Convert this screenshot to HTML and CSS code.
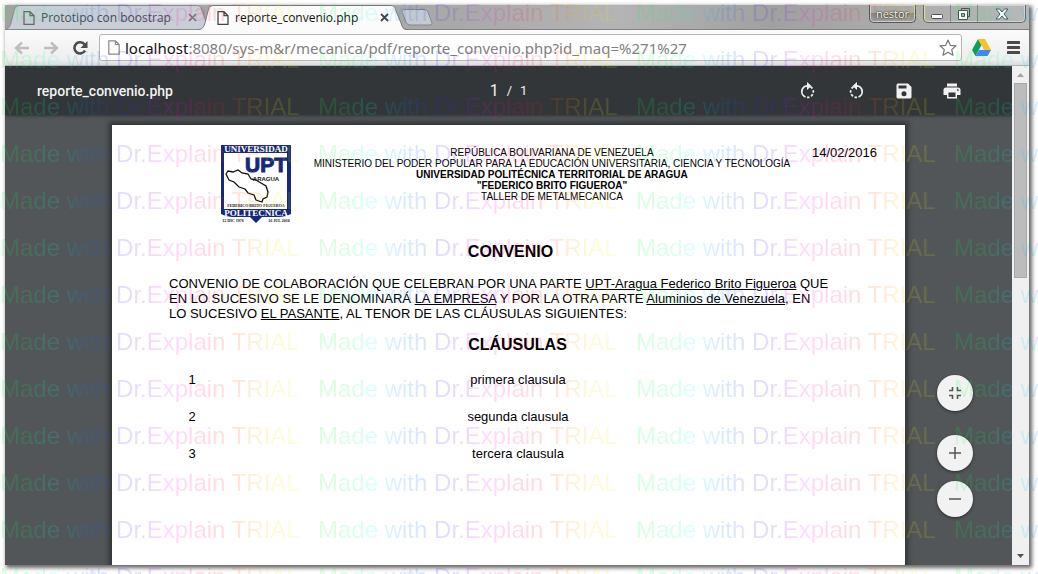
FILE: index.html
```
<!DOCTYPE html>
<html lang="es">
<head>
<meta charset="utf-8">
<title>reporte_convenio.php</title>
<link rel="stylesheet" href="styles.css">
</head>
<body>
<div class="window">
  <header class="tabstrip">
    <div class="tabs" role="tablist">
      <div class="tab tab-back">
        <svg class="tab-shape" viewBox="0 0 207 25" aria-hidden="true"><path d="M0 24.500C4 24 5 21 6 18L9 6C10 2 12 .5 15 .5H191C195 .5 196 2 197 6L202 18C203 22 204 24 207 24.500Z" fill="#c9ced6" stroke="#86898d"/></svg>
        <svg class="doc" viewBox="0 0 12 14" aria-hidden="true"><path d="M1 .7H7L11 4.700V13.300H1ZM7 .7V4.700H11" fill="none" stroke="#666" stroke-width="1.300"/></svg>
        <button class="tab-title" role="tab">Prototipo con boostrap</button>
        <button class="close" aria-label="Cerrar pestaña"><svg viewBox="0 0 9 9"><path d="M1 1L8 8M8 1L1 8" stroke="#777" stroke-width="1.600"/></svg></button>
      </div>
      <div class="tab tab-front">
        <svg class="tab-shape" viewBox="0 0 207 25" aria-hidden="true"><path d="M0 25C4 24 5 21 6 18L9 6C10 2 12 .5 15 .5H191C195 .5 196 2 197 6L202 18C203 22 204 24 207 25Z" fill="#fbfbfb"/><path d="M0 24.500C4 24 5 21 6 18L9 6C10 2 12 .5 15 .5H191C195 .5 196 2 197 6L202 18C203 22 204 24 207 24.500" fill="none" stroke="#77797c"/></svg>
        <svg class="doc" viewBox="0 0 12 14" aria-hidden="true"><path d="M1 .7H7L11 4.700V13.300H1ZM7 .7V4.700H11" fill="none" stroke="#444" stroke-width="1.300"/></svg>
        <button class="tab-title" role="tab" aria-selected="true">reporte_convenio.php</button>
        <button class="close" aria-label="Cerrar pestaña"><svg viewBox="0 0 9 9"><path d="M1 1L8 8M8 1L1 8" stroke="#444" stroke-width="1.800"/></svg></button>
      </div>
      <button class="new-tab" aria-label="Nueva pestaña"><svg viewBox="0 0 32 17"><path d="M3 .5H23Q26 .5 27 3L31 14Q31.500 16 29 16H9Q6.500 16 5.500 14L1 3Q.5 .5 3 .5Z" fill="#c4c9d1" stroke="#85888c"/></svg></button>
    </div>
    <button class="user">nestor</button>
    <div class="win-buttons">
      <button aria-label="Minimizar"><svg viewBox="0 0 14 12"><rect x="1.500" y="6.500" width="11" height="4" rx="1" fill="#fff" stroke="#4c5058"/></svg></button>
      <button aria-label="Restaurar"><svg viewBox="0 0 14 12"><path d="M4.500 .5H12.500V8.500H10.500M4.500 .5V2.500" fill="none" stroke="#4c5058"/><path d="M1.500 2.500H10.500V11.500H1.500ZM4.500 5.500V8.500H7.500V5.500Z" fill="#fff" fill-rule="evenodd" stroke="#4c5058"/></svg></button>
      <button class="win-close" aria-label="Cerrar"><svg viewBox="0 0 14 12"><path d="M1 1H4.500L7 4L9.500 1H13L9 6L13 11H9.500L7 8L4.500 11H1L5 6Z" fill="#fff" stroke="#4c5058"/></svg></button>
    </div>
  </header>

  <nav class="toolbar" aria-label="Navegación">
    <button class="nav" aria-label="Atrás"><svg viewBox="0 0 16 14"><path d="M15 7H2M8 1.500L2 7L8 12.500" fill="none" stroke="#bdbdbd" stroke-width="2.400"/></svg></button>
    <button class="nav" aria-label="Adelante"><svg viewBox="0 0 16 14"><path d="M1 7H14M8 1.500L14 7L8 12.500" fill="none" stroke="#bdbdbd" stroke-width="2.400"/></svg></button>
    <button class="nav" aria-label="Recargar"><svg viewBox="0 0 16 14"><path d="M12.600 3.600A5.600 5.600 0 1 0 13 9.500" fill="none" stroke="#4b4b4b" stroke-width="2.600"/><path d="M15.500 0V7H8.500Z" fill="#4b4b4b"/></svg></button>
    <div class="omnibox">
      <svg class="page-icon" viewBox="0 0 12 15" aria-hidden="true"><path d="M.8 .8H7.500L11.200 4.500V14.200H.8ZM7.500 .8V4.500H11.200" fill="#fafafa" stroke="#8b8b8b" stroke-width="1.200"/></svg>
      <div class="url" role="textbox" aria-label="Dirección"><span class="host">localhost</span>:8080/sys-m&amp;r/mecanica/pdf/reporte_convenio.php?id_maq=%271%27</div>
      <button class="star" aria-label="Marcador"><svg viewBox="0 0 18 17"><path d="M9 1L11.300 6.300L17 6.800L12.700 10.600L14 16.200L9 13.200L4 16.200L5.300 10.600L1 6.800L6.700 6.300Z" fill="#fff" stroke="#777" stroke-width="1.200" stroke-linejoin="round"/></svg></button>
    </div>
    <button class="drive" aria-label="Google Drive"><svg viewBox="0 0 19 17"><path d="M6 0L9.500 6L3.500 17L0 11Z" fill="#109d58"/><path d="M6 0H13L19 11H12Z" fill="#fbc02d"/><path d="M7 11H19L15.500 17H3.500Z" fill="#4285f4"/></svg></button>
    <button class="menu" aria-label="Menú"><svg viewBox="0 0 13 13"><path d="M1 1.500H12M1 6.500H12M1 11.500H12" stroke="#4a4a4a" stroke-width="3" stroke-linecap="round"/></svg></button>
  </nav>

  <div class="content">
    <main class="viewer">
      <div class="pdf-bar">
        <h1 class="file-name">reporte_convenio.php</h1>
        <div class="pages"><span class="current">1</span><span>/</span><span>1</span></div>
        <div class="actions">
          <button aria-label="Girar a la derecha"><svg viewBox="0 0 16 18"><path d="M8 3.800A5.800 5.800 0 0 0 5.500 15" fill="none" stroke="#f1f1f1" stroke-width="1.800"/><path d="M7 15.400A5.800 5.800 0 1 0 8 3.800" fill="none" stroke="#f1f1f1" stroke-width="1.800" stroke-dasharray="2.500 1.700"/><path d="M7 0L11.500 4L7 8Z" fill="#f1f1f1"/></svg></button>
          <button aria-label="Girar a la izquierda"><svg viewBox="0 0 16 18"><path d="M8 3.800A5.800 5.800 0 0 1 10.500 15" fill="none" stroke="#f1f1f1" stroke-width="1.800"/><path d="M9 15.400A5.800 5.800 0 1 1 8 3.800" fill="none" stroke="#f1f1f1" stroke-width="1.800" stroke-dasharray="2.500 1.700"/><path d="M9 0L4.500 4L9 8Z" fill="#f1f1f1"/></svg></button>
          <button aria-label="Guardar"><svg viewBox="0 0 16 18"><path d="M2 1.500H12L15.500 5V15Q15.500 16.500 14 16.500H2Q.5 16.500 .5 15V3Q.5 1.500 2 1.500ZM2.500 3.500V6.500H10.500V3.500ZM8 9.300A2.500 2.500 0 1 0 8 14.300A2.500 2.500 0 1 0 8 9.300Z" fill="#f1f1f1" fill-rule="evenodd"/></svg></button>
          <button aria-label="Imprimir"><svg viewBox="0 0 18 18"><path d="M4 1.500H14V4.500H4ZM3 5.500H15Q17.500 5.500 17.500 8V13H14V16.500H4V13H.5V8Q.5 5.500 3 5.500ZM5.500 10.500V15H12.500V10.500ZM14 7.200V8.800H15.600V7.200Z" fill="#f1f1f1" fill-rule="evenodd"/></svg></button>
        </div>
      </div>

      <div class="canvas">
        <article class="sheet">
          <div class="letterhead">
            <svg class="crest" viewBox="0 0 72 79" role="img" aria-label="UPT Aragua">
              <path d="M1 0H71V69Q66 72 60 72H42L36 78L30 72H12Q6 72 1 69Z" fill="#14287c"/>
              <rect x="4" y="8" width="63" height="56" fill="#fff"/>
              <text x="36" y="7" class="crest-band">UNIVERSIDAD</text>
              <text x="46" y="27" class="crest-upt">UPT</text>
              <text x="46" y="36" class="crest-small">ARAGUA</text>
              <path d="M6 29L8 26L13 27L18 25L22 28L28 29L31 34L36 35L41 38L46 41L48 47L47 52L43 54L42 57L36 55L34 50L28 48L25 44L19 42L14 37L9 35Z" fill="none" stroke="#111" stroke-width="1.300"/>
              <text x="36" y="62" class="crest-name">FEDERICO BRITO FIGUEROA</text>
              <text x="36" y="71" class="crest-band">POLITECNICA</text>
              <text x="13" y="77" class="crest-date">12 DIC 1976</text>
              <text x="59" y="77" class="crest-date">16 JUL 2010</text>
            </svg>
            <div class="institution">
              <div>REPÚBLICA BOLIVARIANA DE VENEZUELA</div>
              <div>MINISTERIO DEL PODER POPULAR PARA LA EDUCACIÓN UNIVERSITARIA, CIENCIA Y TECNOLOGÍA</div>
              <div><b>UNIVERSIDAD POLITÉCNICA TERRITORIAL DE ARAGUA</b></div>
              <div><b>"FEDERICO BRITO FIGUEROA"</b></div>
              <div>TALLER DE METALMECANICA</div>
            </div>
            <time class="date" datetime="2016-02-14">14/02/2016</time>
          </div>
          <h2 class="heading">CONVENIO</h2>
          <p class="intro">CONVENIO DE COLABORACIÓN QUE CELEBRAN POR UNA PARTE <u>UPT-Aragua Federico Brito Figueroa</u> QUE EN LO SUCESIVO SE LE DENOMINARÁ <u>LA EMPRESA</u> Y POR LA OTRA PARTE <u>Aluminios de Venezuela</u>, EN LO SUCESIVO <u>EL PASANTE</u>, AL TENOR DE LAS CLÁUSULAS SIGUIENTES:</p>
          <h2 class="heading heading-clauses">CLÁUSULAS</h2>
          <table class="clauses">
            <tr><td class="num">1</td><td class="clause">primera clausula</td></tr>
            <tr><td class="num">2</td><td class="clause">segunda clausula</td></tr>
            <tr><td class="num">3</td><td class="clause">tercera clausula</td></tr>
          </table>
        </article>
      </div>

      <div class="zoom">
        <button class="fit" aria-label="Ajustar a la página"><svg viewBox="0 0 12 12"><path d="M0 3.500H3.500V0M8.500 0V3.500H12M0 8.500H3.500V12M12 8.500H8.500V12" fill="none" stroke="#555" stroke-width="1.600"/></svg></button>
        <button aria-label="Acercar"><svg viewBox="0 0 12 12"><path d="M6 0V12M0 6H12" stroke="#555" stroke-width="1.500"/></svg></button>
        <button aria-label="Alejar"><svg viewBox="0 0 12 12"><path d="M0 6H12" stroke="#555" stroke-width="1.500"/></svg></button>
      </div>
    </main>
    <div class="scrollbar" aria-hidden="true">
      <svg class="arrow" viewBox="0 0 17 17"><path d="M5 11L8.500 7L12 11Z" fill="#a3a3a3"/></svg>
      <div class="thumb"></div>
      <svg class="arrow" viewBox="0 0 17 17"><path d="M5 6L8.500 10L12 6Z" fill="#505050"/></svg>
    </div>
  </div>
</div>
<div class="watermark" aria-hidden="true"></div>
<script src="watermark.js"></script>
</body>
</html>
```
FILE: watermark.js
```
// Tiles the trial notice over the whole window.
const layer = document.querySelector('.watermark');
const rows = Math.ceil(window.innerHeight / 47);
const columns = Math.ceil(window.innerWidth / 318);
for (let r = 0; r < rows; r++) {
  const row = document.createElement('div');
  row.className = 'mark-row';
  for (let c = 0; c < columns; c++) {
    const cell = document.createElement('div');
    cell.className = 'mark-cell';
    const mark = document.createElement('span');
    mark.className = 'mark';
    mark.textContent = 'Made with Dr.Explain TRIAL';
    cell.append(mark);
    row.append(cell);
  }
  layer.append(row);
}
```
FILE: styles.css
```
* { box-sizing: border-box; }
body {
  margin: 0;
  height: 100vh;
  padding: 5px 9px 9px 5px;
  background: #fff;
  overflow: hidden;
  position: relative;
  font-family: "Liberation Sans", Arial, sans-serif;
}
button { border: 0; padding: 0; margin: 0; background: none; font: inherit; color: inherit; }
svg { display: block; }

.window {
  height: 100%;
  display: flex;
  flex-direction: column;
  box-shadow: 2px 2px 4px 1px rgba(0, 0, 0, .6);
}

/* Tab strip */
.tabstrip {
  display: flex;
  height: 25px;
  flex: none;
  background: linear-gradient(100deg, #a2a2a2 0%, #a9a9a9 45%, #b4b4b4 60%, #a0a0a0 75%, #b8b8b8 100%);
  border-bottom: 1px solid #828282;
}
.tabs { display: flex; flex: 1; min-width: 0; font: 12px/24px "Open Sans", "Noto Sans", sans-serif; }
.tab { position: relative; width: 194px; height: 25px; display: flex; align-items: center; padding-left: 18px; color: #4a4d52; flex: none; }
.tab-shape { position: absolute; left: 0; top: 0; width: 207px; height: 25px; }
.tab-front { z-index: 1; width: 200px; color: #111; }
.doc, .tab-title, .close { position: relative; }
.doc { width: 12px; height: 14px; flex: none; }
.tab-title { flex: 1; text-align: left; padding-left: 6px; white-space: nowrap; }
.close svg { width: 9px; height: 9px; }
.tab-back .close { margin-right: 2px; }
.tab-front .close { margin-right: 10px; }
.new-tab { align-self: center; margin-left: 2px; }
.new-tab svg { width: 32px; height: 17px; }
.user {
  width: 47px;
  height: 18px;
  margin-right: 7px;
  border: 1px solid #55575a;
  border-top: 0;
  border-radius: 0 0 5px 5px;
  background: linear-gradient(#a9a9a9 50%, #858585 50%, #a2a2a2);
  box-shadow: inset 0 0 0 1px #cdcdcd;
  color: #fff;
  text-shadow: 0 0 2px #222, 0 0 1px #222;
  font: 11px/16px "Open Sans", "Noto Sans", sans-serif;
}
.win-buttons {
  display: flex;
  height: 18px;
  margin-right: 3px;
  border: 1px solid #66696c;
  border-top: 0;
  border-radius: 0 0 5px 5px;
  box-shadow: inset 0 0 0 1px #d2d2d2;
}
.win-buttons button { width: 27px; display: grid; place-items: center; border-right: 1px solid #85888b; }
.win-buttons .win-close { width: 47px; border-right: 0; }
.win-buttons svg { width: 14px; height: 12px; }

/* Address bar */
.toolbar {
  display: flex;
  align-items: center;
  flex: none;
  height: 36px;
  padding: 0 9px 0 9px;
  background: linear-gradient(#fbfbfb, #eee 85%, #dcdcdc);
  border-bottom: 1px solid #b5b5b5;
}
.nav { margin-right: 13px; }
.nav svg { width: 16px; height: 14px; }
.omnibox {
  flex: 1;
  min-width: 0;
  height: 27px;
  margin-left: -2px;
  display: flex;
  align-items: center;
  padding: 0 4px 0 8px;
  background: #fff;
  border: 1px solid #b4b4b4;
  border-radius: 3px;
}
.page-icon { width: 12px; height: 15px; flex: none; }
.url { flex: 1; margin-left: 5px; font: 15px/24px "Noto Sans", "Open Sans", sans-serif; color: #808080; white-space: nowrap; overflow: hidden; }
.host { color: #111; }
.star svg { width: 18px; height: 17px; }
.drive { margin-left: 10px; }
.drive svg { width: 19px; height: 17px; }
.menu { margin-left: 16px; }
.menu svg { width: 13px; height: 13px; }

/* PDF viewer */
.content { flex: 1; min-height: 0; display: flex; }
.viewer { position: relative; flex: 1; min-width: 0; display: flex; flex-direction: column; background: #525659; overflow: hidden; }
.pdf-bar {
  display: grid;
  grid-template-columns: 1fr auto 1fr;
  align-items: center;
  height: 49px;
  flex: none;
  padding: 0 32px;
  background: #323639;
  box-shadow: 0 1px 3px rgba(0, 0, 0, .4);
  color: #f1f1f1;
  font-family: Roboto, sans-serif;
  z-index: 1;
}
.file-name { margin: 0; font-size: 14px; font-weight: 500; }
.pages { display: flex; align-items: center; gap: 8px; font-size: 13px; }
.current { font-size: 16px; }
.actions { display: flex; justify-content: flex-end; gap: 30px; padding-right: 19px; }
.actions svg { width: 18px; height: 18px; }
.canvas { flex: 1; min-height: 0; padding: 10px 0 0; display: flex; justify-content: center; }
.sheet {
  width: 793px;
  padding: 20px 28px 0 57px;
  background: #fff;
  box-shadow: 0 0 5px 3px rgba(0, 0, 0, .4);
  color: #000;
  font-size: 13px;
  line-height: 15px;
}
.letterhead { display: flex; align-items: flex-start; padding-left: 51px; }
.crest { width: 72px; height: 79px; flex: none; }
.crest text { text-anchor: middle; }
.crest-band { font: bold 9px "Liberation Serif", serif; fill: #fff; }
.crest-upt { font: bold 21px "Liberation Sans Narrow", "Liberation Sans", sans-serif; fill: #14287c; stroke: #14287c; stroke-width: 1; }
.crest-small { font: bold 6px "Liberation Sans", sans-serif; fill: #111; }
.crest-name { font: bold 4px "Liberation Serif", serif; fill: #111; }
.crest-date { font: bold 4px "Liberation Serif", serif; fill: #111; }
.institution { flex: 1; padding-top: 2px; text-align: center; font-size: 10px; line-height: 11px; white-space: nowrap; }
.date { white-space: nowrap; }
.heading { margin: 18px 25px 0 0; font-size: 16px; line-height: 20px; text-align: center; }
.heading-clauses { margin: 14px 11px 0 0; }
.intro { margin: 14px 46px 0 0; }
.clauses { width: 684px; margin-top: 6px; border-collapse: collapse; }
.clauses td { height: 37px; padding: 0; text-align: center; }
.clauses .num { width: 46px; }
.clauses .clause { padding-right: 32px; }

.zoom { position: absolute; right: 39px; bottom: 48px; z-index: 2; display: flex; flex-direction: column; gap: 10px; }
.zoom button { width: 36px; height: 36px; border-radius: 50%; background: #f2f2f2; display: grid; place-items: center; box-shadow: 0 1px 3px rgba(0, 0, 0, .5); }
.zoom .fit { margin-bottom: 14px; }
.zoom svg { width: 12px; height: 12px; }

.scrollbar { width: 17px; flex: none; display: flex; flex-direction: column; background: #f0f0f0; }
.arrow { width: 17px; height: 17px; flex: none; }
.thumb { height: 195px; margin: 0 2px auto; background: #bcbcbc; border: 1px solid #a8a8a8; }

/* Trial notice */
.watermark { position: absolute; inset: 0; overflow: hidden; pointer-events: none; z-index: 10; opacity: .14; }
.mark-row { display: flex; height: 47px; }
.mark-cell { width: 318px; flex: none; }
.mark {
  font-size: 24px;
  line-height: 26px;
  white-space: nowrap;
  color: transparent;
  background: linear-gradient(90deg, #00ff30, #00ff60 10%, #00ffff 19%, #0080ff 28%, #2020ff 40%, #8000ff 49%, #ff00ff 55%, #ff0060 68%, #ff2000 76%, #ff9000 84%, #ffe000 91%, #e0ff00);
  -webkit-background-clip: text;
  background-clip: text;
}
```
